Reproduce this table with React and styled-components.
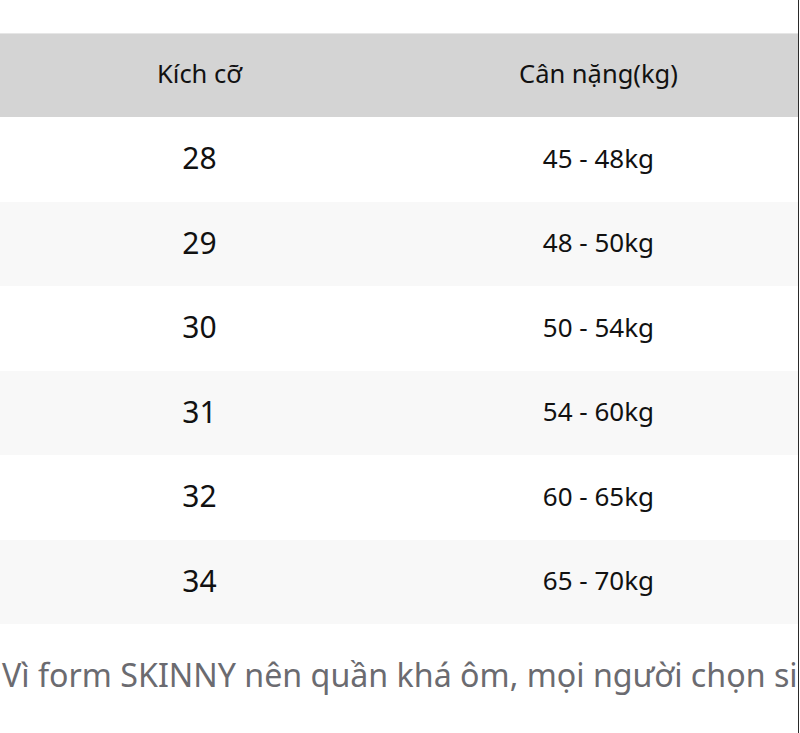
import React from 'react';
import styled, { createGlobalStyle } from 'styled-components';

const sizes = [
  { size: '28', weight: '45 - 48kg' },
  { size: '29', weight: '48 - 50kg' },
  { size: '30', weight: '50 - 54kg' },
  { size: '31', weight: '54 - 60kg' },
  { size: '32', weight: '60 - 65kg' },
  { size: '34', weight: '65 - 70kg' },
];

const App = () => {
  return (
    <>
      <Global />
      <Page>
        <Table>
          <HeadRow>
            <HeadCell>Kích cỡ</HeadCell>
            <HeadCell>Cân nặng(kg)</HeadCell>
          </HeadRow>
          {sizes.map((row, i) => (
            <Row key={row.size} striped={i % 2 === 1}>
              <SizeCell>{row.size}</SizeCell>
              <WeightCell>{row.weight}</WeightCell>
            </Row>
          ))}
        </Table>
        <Note>Vì form SKINNY nên quần khá ôm, mọi người chọn size theo bảng nhé</Note>
      </Page>
    </>
  );
};

const Global = createGlobalStyle`
  body {
    margin: 0;
    background: #fff;
    font-family: "Noto Sans", "Open Sans", sans-serif;
  }
`;

const Page = styled.div`
  width: 799px;
  height: 733px;
  box-sizing: border-box;
  padding-top: 33px;
  border-right: 1px solid #2a2a2a;
  overflow: hidden;
`;

const Table = styled.div`
  display: flex;
  flex-direction: column;
`;

const HeadRow = styled.div`
  display: grid;
  grid-template-columns: 1fr 1fr;
  height: 84px;
  padding-bottom: 6px;
  background: #d4d4d4;
  border-top: 1px solid #e6e6e6;
  box-sizing: border-box;
`;

const Row = styled.div`
  display: grid;
  grid-template-columns: 1fr 1fr;
  height: 84.5px;
  padding-bottom: 3px;
  box-sizing: border-box;
  background: ${p => (p.striped ? '#f8f8f8' : '#fff')};
`;

const Cell = styled.div`
  display: flex;
  align-items: center;
  justify-content: center;
  color: #111;
`;

const HeadCell = styled(Cell)`
  font-size: 25.5px;
`;

const SizeCell = styled(Cell)`
  font-size: 30px;
`;

const WeightCell = styled(Cell)`
  font-size: 26px;
`;

const Note = styled.div`
  margin-top: 29px;
  padding-left: 2px;
  font-size: 32.2px;
  color: #6b6b70;
  white-space: nowrap;
  overflow: hidden;
`;

export default App;
